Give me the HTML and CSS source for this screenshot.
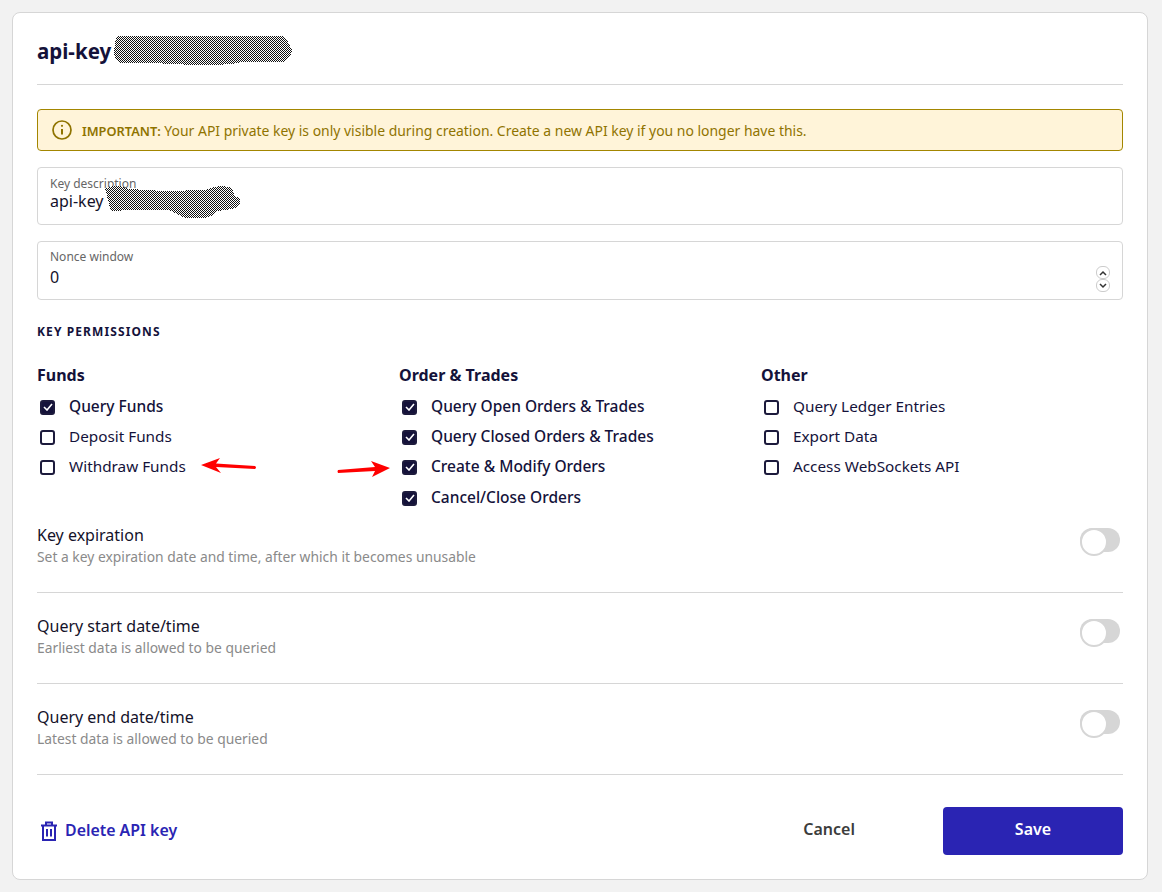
FILE: index.html
```html
<!DOCTYPE html>
<html lang="en">
<head>
  <meta charset="UTF-8">
  <title>API key</title>
  <link rel="stylesheet" href="styles.css">
</head>
<body>
  <svg class="defs" width="0" height="0">
    <defs>
      <pattern id="dither" width="2" height="2" patternUnits="userSpaceOnUse">
        <rect width="2" height="2" fill="#fff"/>
        <rect width="1" height="1" fill="#111"/>
        <rect x="1" y="1" width="1" height="1" fill="#111"/>
      </pattern>
    </defs>
  </svg>

  <div class="card">
    <div class="head">
      <h1>api-key</h1>
      <svg class="scribble scribble-title" width="180" height="32" viewBox="0 0 180 32">
        <path fill="url(#dither)" d="M2 6 Q3 1 8 1 L70 1 Q80 0 90 1 L168 1 Q174 2 175 8 L179 14 Q179 20 175 24 L170 27 L130 27 Q110 31 80 30 L40 28 L10 28 Q3 28 1 20 Z"/>
      </svg>
    </div>

    <div class="alert">
      <svg width="20" height="20" viewBox="0 0 20 20" fill="none" stroke="#8f7300" stroke-width="1.7">
        <circle cx="10" cy="10" r="9"/>
        <path d="M10 9v5.5" stroke-width="2"/>
        <circle cx="10" cy="5.8" r="1.1" fill="#8f7300" stroke="none"/>
      </svg>
      <p><b>IMPORTANT:</b> Your API private key is only visible during creation. Create a new API key if you no longer have this.</p>
    </div>

    <div class="field field-desc">
      <label>Key description</label>
      <div class="value">api-key</div>
      <svg class="scribble scribble-field" width="136" height="34" viewBox="0 0 136 34">
        <path fill="url(#dither)" d="M0 4 Q8 0 14 1 L24 4 L60 6 L100 5 Q110 1 118 1 L127 3 L129 10 L135 14 L135 20 L128 24 L112 26 Q106 33 98 33 L80 33 L64 25 L26 25 L8 26 Q4 24 4 18 Z"/>
      </svg>
    </div>

    <div class="field field-nonce">
      <label>Nonce window</label>
      <div class="value">0</div>
      <div class="spin">
        <span><svg width="8" height="6" viewBox="0 0 8 6" fill="none" stroke="#333" stroke-width="1.5"><path d="M1 5l3-3 3 3"/></svg></span>
        <span><svg width="8" height="6" viewBox="0 0 8 6" fill="none" stroke="#333" stroke-width="1.5"><path d="M1 1l3 3 3-3"/></svg></span>
      </div>
    </div>

    <h2>KEY PERMISSIONS</h2>

    <div class="perms">
      <div class="col">
        <h3>Funds</h3>
        <div class="check on"><i><svg width="10" height="8" viewBox="0 0 10 8" fill="none" stroke="#fff" stroke-width="1.6"><path d="M1 4l3 3 5-6"/></svg></i>Query Funds</div>
        <div class="check"><i></i>Deposit Funds</div>
        <div class="check"><i></i>Withdraw Funds</div>
      </div>
      <div class="col">
        <h3>Order &amp; Trades</h3>
        <div class="check on"><i><svg width="10" height="8" viewBox="0 0 10 8" fill="none" stroke="#fff" stroke-width="1.6"><path d="M1 4l3 3 5-6"/></svg></i>Query Open Orders &amp; Trades</div>
        <div class="check on"><i><svg width="10" height="8" viewBox="0 0 10 8" fill="none" stroke="#fff" stroke-width="1.6"><path d="M1 4l3 3 5-6"/></svg></i>Query Closed Orders &amp; Trades</div>
        <div class="check on"><i><svg width="10" height="8" viewBox="0 0 10 8" fill="none" stroke="#fff" stroke-width="1.6"><path d="M1 4l3 3 5-6"/></svg></i>Create &amp; Modify Orders</div>
        <div class="check on check-last"><i><svg width="10" height="8" viewBox="0 0 10 8" fill="none" stroke="#fff" stroke-width="1.6"><path d="M1 4l3 3 5-6"/></svg></i>Cancel/Close Orders</div>
      </div>
      <div class="col">
        <h3>Other</h3>
        <div class="check"><i></i>Query Ledger Entries</div>
        <div class="check"><i></i>Export Data</div>
        <div class="check"><i></i>Access WebSockets API</div>
      </div>
      <svg class="arrow arrow-left" width="56" height="16" viewBox="0 0 56 16">
        <path fill="#f00" d="M0 7 L19 0 L15 5.5 L54 8 Q56 9.5 54 11 L15 9 L20 15 Z"/>
      </svg>
      <svg class="arrow arrow-right" width="54" height="17" viewBox="0 0 54 17">
        <path fill="#f00" d="M53 7 L34 0 L38 6 L1 9 Q0 10.5 1 12 L38 10 L35 16 Z"/>
      </svg>
    </div>

    <div class="option option-first">
      <div><h4>Key expiration</h4><p>Set a key expiration date and time, after which it becomes unusable</p></div>
      <span class="toggle"></span>
    </div>
    <div class="option">
      <div><h4>Query start date/time</h4><p>Earliest data is allowed to be queried</p></div>
      <span class="toggle"></span>
    </div>
    <div class="option">
      <div><h4>Query end date/time</h4><p>Latest data is allowed to be queried</p></div>
      <span class="toggle"></span>
    </div>

    <div class="foot">
      <a class="delete">
        <svg width="18" height="20" viewBox="0 0 18 20" fill="none" stroke="#2a24b3" stroke-width="2">
          <path d="M1 4.5h16M6 4.5V1.5h6v3M3 4.5v14.5h12V4.5M7 8v7.5M11 8v7.5"/>
        </svg>
        <span>Delete API key</span>
      </a>
      <a class="cancel">Cancel</a>
      <button class="save">Save</button>
    </div>
  </div>
</body>
</html>
```

FILE: styles.css
```css
* {
  box-sizing: border-box;
}
body {
  margin: 0;
  padding: 12px 14px 12px 12px;
  background: #f2f2f2;
  font-family: "Noto Sans", sans-serif;
  color: #14123a;
  font-size: 15.3px;
}
.defs {
  position: absolute;
}
.card {
  height: 868px;
  background: #fff;
  border: 1px solid #d6d6d6;
  border-radius: 8px;
  padding: 0 24px;
}
.head {
  position: relative;
  height: 72px;
  border-bottom: 1px solid #d6d6d6;
  display: flex;
  align-items: center;
}
h1 {
  margin: 4px 0 0;
  font-size: 20.5px;
  font-weight: 700;
}
.scribble {
  position: absolute;
  shape-rendering: crispEdges;
}
.scribble-title {
  left: 76px;
  top: 22px;
}
.alert {
  margin-top: 24px;
  height: 42px;
  background: #fff4d9;
  border: 1px solid #a38600;
  border-radius: 4px;
  display: flex;
  align-items: center;
  gap: 10px;
  padding-left: 14px;
  color: #8f7300;
  font-size: 13.95px;
}
.alert p {
  margin: 0;
}
.alert b {
  font-size: 12.8px;
  font-weight: 600;
}
.field {
  position: relative;
  border: 1px solid #d6d6d6;
  border-radius: 4px;
  padding: 8px 12px 0;
}
.field-desc {
  margin-top: 16px;
  height: 58px;
}
.field-nonce {
  margin-top: 16px;
  height: 59px;
  padding-top: 7px;
}
.field-nonce label {
  margin-bottom: 2px;
}
label {
  display: block;
  font-size: 12px;
  line-height: 16px;
  color: #666;
}
.value {
  font-size: 16px;
  line-height: 20px;
  color: #14122a;
}
.field-desc .value {
  line-height: 18px;
}
.scribble-field {
  left: 67px;
  top: 17px;
}
.spin {
  position: absolute;
  right: 12px;
  top: 24px;
  display: flex;
  flex-direction: column;
}
.spin span {
  width: 14px;
  height: 13px;
  border: 1px solid #ccc;
  border-radius: 6px;
  display: flex;
  align-items: center;
  justify-content: center;
}
h2 {
  margin: 24px 0 0;
  font-size: 12px;
  line-height: 16px;
  letter-spacing: 1.1px;
  font-weight: 700;
}
.perms {
  position: relative;
  display: grid;
  grid-template-columns: repeat(3, 362px);
  margin-top: 25px;
  height: 138px;
}
h3 {
  margin: 0 0 6px;
  font-size: 16px;
  line-height: 20px;
  font-weight: 700;
}
.check {
  display: flex;
  align-items: center;
  height: 30px;
  gap: 14px;
  padding-left: 3px;
}
.check-last {
  margin-top: 1px;
}
.check i {
  width: 15px;
  height: 15px;
  flex: none;
  margin-top: 2px;
  border: 2px solid #1c1a3c;
  border-radius: 3px;
  display: flex;
  align-items: center;
  justify-content: center;
}
.check.on i {
  background: #14123a;
}
.check.on {
  font-size: 15.5px;
  font-weight: 500;
}
.arrow {
  position: absolute;
}
.arrow-left {
  left: 164px;
  top: 93px;
}
.arrow-right {
  left: 300px;
  top: 96px;
}
.option {
  height: 91px;
  border-bottom: 1px solid #d6d6d6;
  display: flex;
  justify-content: space-between;
  align-items: flex-start;
  padding: 23px 3px 0 0;
}
.option-first {
  height: 90px;
  padding-top: 22px;
}
h4 {
  margin: 0 0 3px;
  font-size: 16px;
  line-height: 20px;
  font-weight: 400;
  color: #14122a;
}
.option p {
  margin: 0;
  font-size: 13.85px;
  line-height: 18px;
  color: #8a8a8a;
}
.toggle {
  position: relative;
  width: 40px;
  height: 24px;
  margin-top: 3px;
  background: #d6d6d6;
  border-radius: 12px;
}
.toggle::after {
  content: "";
  position: absolute;
  left: 0;
  top: 0;
  width: 24px;
  height: 24px;
  background: #fff;
  border: 2px solid #d6d6d6;
  border-radius: 50%;
}
.foot {
  display: flex;
  align-items: center;
  margin-top: 32px;
  height: 48px;
}
.delete {
  display: flex;
  align-items: center;
  gap: 7px;
  padding-left: 3px;
  color: #2a24b3;
  font-weight: 600;
  font-size: 15.9px;
}
.delete span {
  margin-bottom: 2px;
}
.cancel {
  margin-left: auto;
  margin-right: 88px;
  margin-bottom: 5px;
  font-size: 16px;
  font-weight: 600;
  color: #3c3c3c;
}
.save {
  width: 180px;
  height: 48px;
  border: 0;
  border-radius: 4px;
  background: #2a24b3;
  color: #fff;
  padding-bottom: 5px;
  font: 600 16px "Noto Sans", sans-serif;
}
```
